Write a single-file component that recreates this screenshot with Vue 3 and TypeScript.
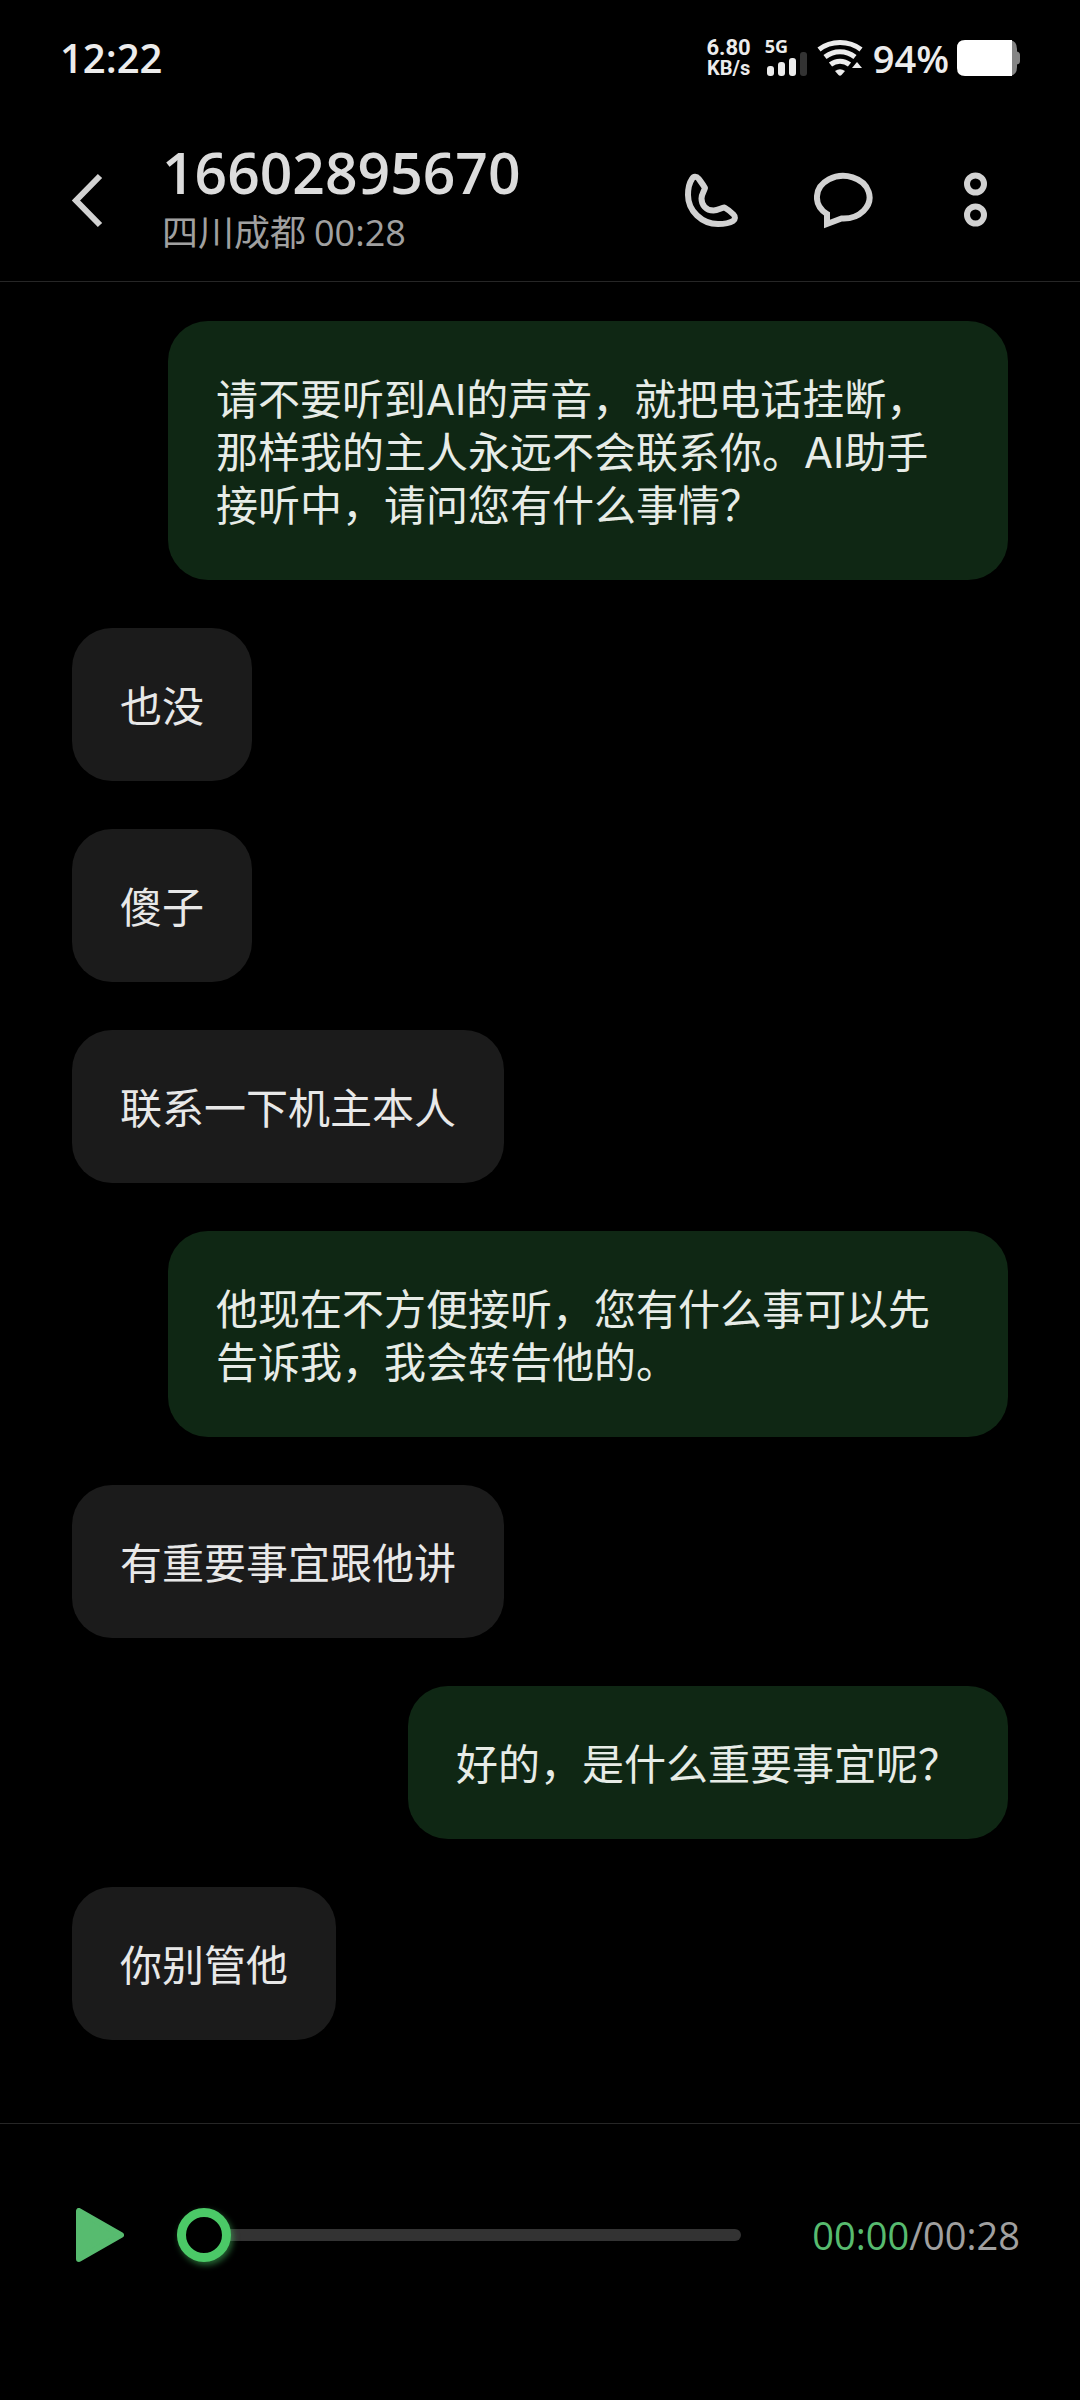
<script setup lang="ts">
import { ref, computed } from 'vue'

interface Message {
  id: number
  from: 'caller' | 'assistant'
  text: string
}

const phoneNumber = '16602895670'
const region = '四川成都'
const duration = 28
const position = ref(0)

const messages: Message[] = [
  { id: 1, from: 'assistant', text: '请不要听到AI的声音，就把电话挂断，那样我的主人永远不会联系你。AI助手接听中，请问您有什么事情？' },
  { id: 2, from: 'caller', text: '也没' },
  { id: 3, from: 'caller', text: '傻子' },
  { id: 4, from: 'caller', text: '联系一下机主本人' },
  { id: 5, from: 'assistant', text: '他现在不方便接听，您有什么事可以先告诉我，我会转告他的。' },
  { id: 6, from: 'caller', text: '有重要事宜跟他讲' },
  { id: 7, from: 'assistant', text: '好的，是什么重要事宜呢？' },
  { id: 8, from: 'caller', text: '你别管他' },
]

function clock(seconds: number): string {
  const m = String(Math.floor(seconds / 60)).padStart(2, '0')
  const s = String(seconds % 60).padStart(2, '0')
  return `${m}:${s}`
}

const elapsed = computed(() => clock(Number(position.value)))
const total = clock(duration)
</script>

<template>
  <div class="screen">
    <div class="status">
      <span class="status-time">12:22</span>
      <div class="status-right">
        <div class="speed">
          <span class="speed-value">6.80</span>
          <span class="speed-unit">KB/s</span>
        </div>
        <div class="cell">
          <span class="cell-label">5G</span>
          <svg class="cell-bars" width="42" height="24" viewBox="0 0 42 24" aria-hidden="true">
            <rect x="2" y="14" width="7" height="10" rx="3" fill="#ececec" />
            <rect x="13" y="10" width="7" height="14" rx="3" fill="#ececec" />
            <rect x="24" y="6" width="7" height="18" rx="3" fill="#ececec" />
            <rect x="35" y="0" width="7" height="24" rx="3" fill="#333" />
          </svg>
        </div>
        <svg class="wifi" width="46" height="38" viewBox="0 0 46 38" aria-hidden="true">
          <g fill="none" stroke="#ececec" stroke-width="5">
            <path d="M2 10.500C14 1.200 32 1.200 44 10.500" />
            <path d="M8 18C17 11 29 11 38 18" />
            <path d="M13.500 25.500C19 21 27 21 32.500 25.500" />
          </g>
          <path d="M18 32Q23 28.500 28 32L24.500 36Q23 37.500 21.500 36Z" fill="#ececec" />
          <path d="M40 23L45 29H35Z" fill="#ececec" />
        </svg>
        <span class="percent">94%</span>
        <svg class="battery" width="64" height="36" viewBox="0 0 64 36" aria-hidden="true">
          <path d="M50 0H53Q60 1 60 9V11.500Q63 12 63 15V21Q63 24 60 24.500V27Q60 35 53 36H50Z" fill="#858585" />
          <path d="M8 0H55V36H8Q0 36 0 28V8Q0 0 8 0Z" fill="#fff" />
        </svg>
      </div>
    </div>

    <header class="header">
      <button class="icon-button" type="button" aria-label="返回">
        <svg width="60" height="60" viewBox="0 0 60 60" fill="none" stroke="#d2d2d2" stroke-width="6">
          <path d="M43 5L19 29.500L43 54" />
        </svg>
      </button>
      <div class="contact">
        <h1 class="number">{{ phoneNumber }}</h1>
        <p class="meta"><span>{{ region }}</span><span>{{ total }}</span></p>
      </div>
      <div class="actions">
        <button class="icon-button" type="button" aria-label="拨打电话">
          <svg width="60" height="60" viewBox="-2 -2 60 60" fill="none" stroke="#d2d2d2" stroke-width="6" stroke-linejoin="round">
            <path d="M8 6C4.500 11 4 17 4 22C4 38 18 51 34 51C40 51 45 50.500 49 48C51.500 46 51.500 43.500 49.500 41.500C46 38 44 36.500 40.500 34.500C37 35 34 37.500 29.500 37.500C22 37.500 17.500 32 17.500 25.500C17.500 21 20 18.500 21 15C19 11.500 17 9 14.500 5.500C12.500 3 9.500 3 8 6Z" />
          </svg>
        </button>
        <button class="icon-button" type="button" aria-label="发送短信">
          <svg width="60" height="60" viewBox="2 0 60 60" fill="none" stroke="#d2d2d2" stroke-width="6">
            <path d="M15 43V53L29.500 47.500A26.300 21.300 0 1 0 15 43Z" />
          </svg>
        </button>
        <button class="icon-button" type="button" aria-label="更多">
          <svg width="60" height="60" viewBox="0 0 60 60" fill="none" stroke="#d2d2d2" stroke-width="6">
            <circle cx="29.500" cy="13" r="8.500" />
            <circle cx="29.500" cy="44" r="8.500" />
          </svg>
        </button>
      </div>
    </header>

    <main class="chat">
      <p v-for="m in messages" :key="m.id" class="bubble" :class="m.from">{{ m.text }}</p>
    </main>

    <footer class="player">
      <button class="play" type="button" aria-label="播放">
        <svg width="48" height="54" viewBox="0 0 48 54" aria-hidden="true">
          <path d="M3 3V51L45 27Z" fill="#57bb6f" stroke="#57bb6f" stroke-width="6" stroke-linejoin="round" />
        </svg>
      </button>
      <input v-model="position" class="seek" type="range" min="0" :max="duration" aria-label="播放进度" />
      <div class="time"><span class="elapsed">{{ elapsed }}</span>/{{ total }}</div>
    </footer>
  </div>
</template>

<style>
html,
body {
  margin: 0;
  background: #000;
}
</style>

<style scoped>
.screen {
  display: flex;
  flex-direction: column;
  min-height: 100vh;
  background: #000;
  color: #ececec;
  font-family: "Open Sans", "Noto Sans CJK SC", sans-serif;
}

.status {
  display: flex;
  align-items: center;
  justify-content: space-between;
  height: 116px;
  padding: 0 59px 0 60px;
}

.status-time {
  font-size: 40px;
  line-height: 48px;
  font-weight: 600;
}

.status-right {
  display: flex;
  align-items: center;
}

.speed {
  display: flex;
  flex-direction: column;
  align-items: center;
  font-family: Roboto, sans-serif;
  font-weight: 700;
}

.speed-value {
  font-size: 22px;
  line-height: 20px;
}

.speed-unit {
  font-size: 20px;
  line-height: 20px;
}

.cell {
  display: flex;
  flex-direction: column;
  margin-left: 14px;
}

.cell-label {
  font-size: 18px;
  line-height: 12px;
  font-weight: 700;
}

.wifi {
  margin-left: 10px;
}

.percent {
  margin-left: 10px;
  font-size: 38px;
  line-height: 48px;
  font-weight: 600;
}

.battery {
  margin-left: 8px;
}

.header {
  display: flex;
  align-items: center;
  box-sizing: border-box;
  height: 166px;
  padding: 4px 74px 0 57px;
  border-bottom: 1px solid #262626;
}

.icon-button,
.play {
  display: flex;
  margin: 0;
  padding: 0;
  border: 0;
  background: none;
  cursor: pointer;
}

.contact {
  flex: 1;
  margin-left: 45px;
}

.number {
  margin: 0;
  font-size: 57px;
  line-height: 64px;
  font-weight: 600;
  color: #dcdcdc;
}

.meta {
  display: flex;
  gap: 8px;
  margin: 0;
  font-size: 36px;
  line-height: 58px;
  color: #a0a0a0;
}

.actions {
  display: flex;
  gap: 72px;
}

.chat {
  display: flex;
  flex: 1;
  flex-direction: column;
  align-items: flex-start;
  gap: 48px;
  padding: 39px 72px 48px;
}

.bubble {
  box-sizing: border-box;
  max-width: calc(100% - 96px);
  margin: 0;
  padding: 52px 48px 48px;
  border-radius: 40px;
  font-family: Inter, "Noto Sans CJK SC", sans-serif;
  font-size: 42px;
  line-height: 53px;
}

.caller {
  background: #1b1b1b;
  color: #e8e8e8;
}

.assistant {
  align-self: flex-end;
  background: #0f2714;
  color: #e7ece7;
}

.player {
  display: flex;
  align-items: center;
  padding: 84px 60px 138px 76px;
  border-top: 1px solid #262626;
}

.seek {
  flex: 1;
  min-width: 0;
  height: 54px;
  margin: 0 71px 0 53px;
  appearance: none;
  background: none;
  cursor: pointer;
}

.seek::-webkit-slider-runnable-track {
  height: 12px;
  border-radius: 6px;
  background: #333;
}

.seek::-webkit-slider-thumb {
  box-sizing: border-box;
  width: 54px;
  height: 54px;
  margin-top: -21px;
  appearance: none;
  border: 9px solid #4bc967;
  border-radius: 50%;
  background: #000;
  box-shadow: 2px 3px 6px rgba(75, 201, 103, 0.5);
}

.time {
  font-size: 38px;
  line-height: 54px;
  color: #a0a0a0;
}

.elapsed {
  color: #57bb6f;
}
</style>
